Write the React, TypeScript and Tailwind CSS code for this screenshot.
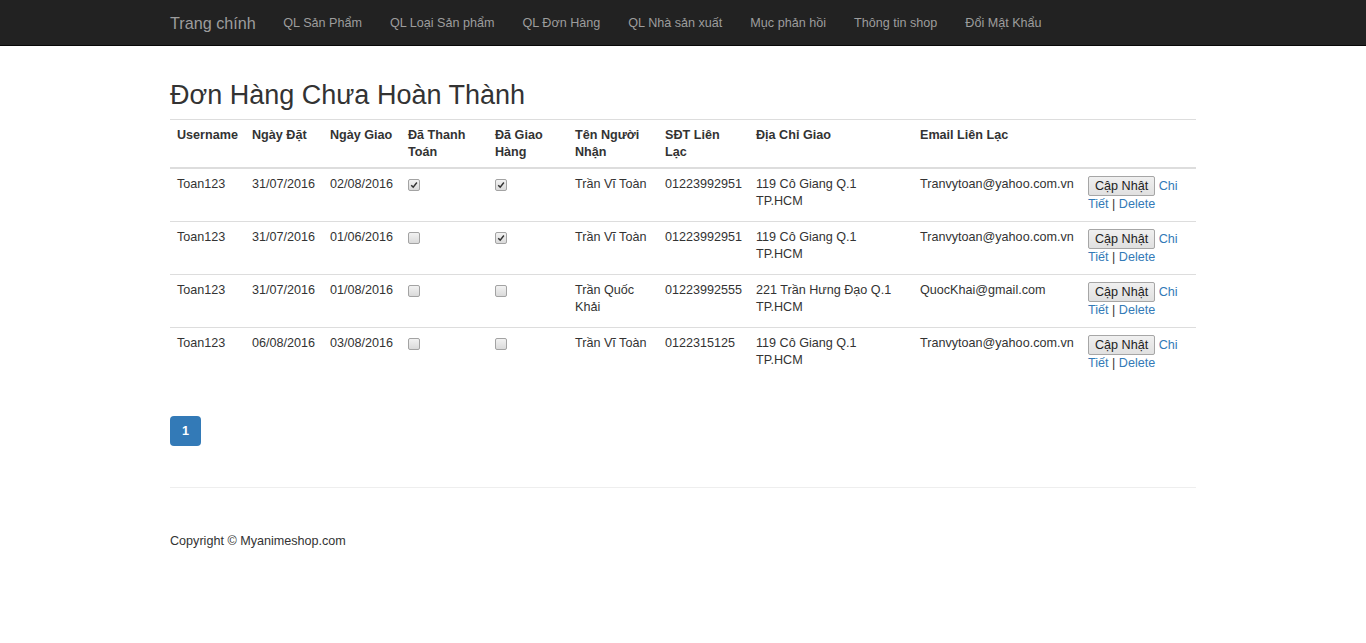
import React from "react";

type Order = {
  user: string;
  ordered: string;
  delivery: string;
  paid: boolean;
  shipped: boolean;
  receiver: string;
  phone: string;
  address: string;
  email: string;
};

const orders: Order[] = [
  { user: "Toan123", ordered: "31/07/2016", delivery: "02/08/2016", paid: true, shipped: true, receiver: "Trần Vĩ Toàn", phone: "01223992951", address: "119 Cô Giang Q.1 TP.HCM", email: "Tranvytoan@yahoo.com.vn" },
  { user: "Toan123", ordered: "31/07/2016", delivery: "01/06/2016", paid: false, shipped: true, receiver: "Trần Vĩ Toàn", phone: "01223992951", address: "119 Cô Giang Q.1 TP.HCM", email: "Tranvytoan@yahoo.com.vn" },
  { user: "Toan123", ordered: "31/07/2016", delivery: "01/08/2016", paid: false, shipped: false, receiver: "Trần Quốc Khải", phone: "01223992555", address: "221 Trần Hưng Đạo Q.1 TP.HCM", email: "QuocKhai@gmail.com" },
  { user: "Toan123", ordered: "06/08/2016", delivery: "03/08/2016", paid: false, shipped: false, receiver: "Trần Vĩ Toàn", phone: "0122315125", address: "119 Cô Giang Q.1 TP.HCM", email: "Tranvytoan@yahoo.com.vn" },
];

const navLinks = [
  "QL Sản Phẩm",
  "QL Loại Sản phẩm",
  "QL Đơn Hàng",
  "QL Nhà sản xuất",
  "Mục phản hồi",
  "Thông tin shop",
  "Đổi Mật Khẩu",
];

const headers = [
  "Username",
  "Ngày Đặt",
  "Ngày Giao",
  "Đã Thanh Toán",
  "Đã Giao Hàng",
  "Tên Người Nhận",
  "SĐT Liên Lạc",
  "Địa Chỉ Giao",
  "Email Liên Lạc",
  "",
];

// old-style disabled checkbox
function Check({ checked }: { checked: boolean }) {
  return (
    <span className="inline-block w-[12px] h-[12px] mt-[3px] border border-[#a3a3a3] rounded-[2px] bg-gradient-to-b from-[#f2f2f2] to-[#dadada] relative">
      {checked && (
        <svg viewBox="0 0 10 10" className="absolute left-[1px] top-[1px] w-[8px] h-[8px]">
          <path d="M1.5 5.2 L4 7.6 L8.6 1.8" fill="none" stroke="#333" strokeWidth="1.8" />
        </svg>
      )}
    </span>
  );
}

export default function App() {
  return (
    <div className="min-h-[643px] bg-white text-[#333] text-[12.6px] leading-[17px]" style={{ fontFamily: '"Liberation Sans", Arial, sans-serif' }}>
      {/* Navbar */}
      <nav className="h-[46px] bg-[#222] border-b border-[#080808]">
        <div className="w-[1026px] mx-auto flex items-center h-full pt-[2px]">
          <span className="text-[16.2px] text-[#9d9d9d] pr-[13.5px]">Trang chính</span>
          {navLinks.map((l) => (
            <span key={l} className="px-[14px] text-[#9d9d9d]">
              {l}
            </span>
          ))}
        </div>
      </nav>

      <div className="w-[1026px] mx-auto">
        <h2 className="text-[27px] leading-[30px] mt-[34px] mb-[9px] font-normal">Đơn Hàng Chưa Hoàn Thành</h2>

        <table className="w-full table-fixed border-collapse">
          <colgroup>
            <col className="w-[75px]" />
            <col className="w-[78px]" />
            <col className="w-[78px]" />
            <col className="w-[87px]" />
            <col className="w-[80px]" />
            <col className="w-[90px]" />
            <col className="w-[91px]" />
            <col className="w-[164px]" />
            <col className="w-[168px]" />
            <col className="w-[115px]" />
          </colgroup>
          <thead>
            <tr className="border-t border-[#ddd] border-b-2">
              {headers.map((h, i) => (
                <th key={i} className="text-left align-top font-bold px-[7px] pt-[7px] pb-[6px]">
                  {h}
                </th>
              ))}
            </tr>
          </thead>
          <tbody>
            {orders.map((o, i) => (
              <tr key={i} className="border-t border-[#ddd] first:border-t-0">
                <td className="align-top px-[7px] pt-[7px] pb-[8px]">{o.user}</td>
                <td className="align-top px-[7px] pt-[7px] pb-[8px]">{o.ordered}</td>
                <td className="align-top px-[7px] pt-[7px] pb-[8px]">{o.delivery}</td>
                <td className="align-top px-[7px] pt-[7px] pb-[8px]">
                  <Check checked={o.paid} />
                </td>
                <td className="align-top px-[7px] pt-[7px] pb-[8px]">
                  <Check checked={o.shipped} />
                </td>
                <td className="align-top px-[7px] pt-[7px] pb-[8px]">{o.receiver}</td>
                <td className="align-top px-[7px] pt-[7px] pb-[8px]">{o.phone}</td>
                <td className="align-top px-[7px] pt-[7px] pb-[8px]">{o.address}</td>
                <td className="align-top px-[7px] pt-[7px] pb-[8px]">{o.email}</td>
                <td className="align-top px-[7px] pt-[7px] pb-[8px]">
                  <button className="h-[20px] px-[6px] border border-[#a6a6a6] rounded-[2px] bg-gradient-to-b from-[#f0f0f0] to-[#e0e0e0] text-[12.6px] leading-[17px] text-[#222]">
                    Cập Nhật
                  </button>{" "}
                  <span className="text-[#337ab7]">Chi Tiết</span> | <span className="text-[#337ab7]">Delete</span>
                </td>
              </tr>
            ))}
          </tbody>
        </table>

        {/* Pagination */}
        <div className="mt-[36px] flex">
          <span className="w-[31px] h-[30px] rounded-[4px] bg-[#337ab7] text-white font-bold flex items-center justify-center">1</span>
        </div>

        <hr className="mt-[41px] border-t border-[#eee]" />

        <footer className="mt-[45px]">Copyright © Myanimeshop.com</footer>
      </div>
    </div>
  );
}
